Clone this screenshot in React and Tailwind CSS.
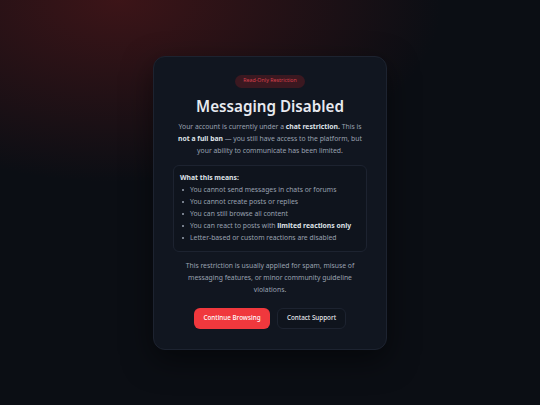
export default function App() {
  const items = [
    <>You cannot send messages in chats or forums</>,
    <>You cannot create posts or replies</>,
    <>You can still browse all content</>,
    <>
      You can react to posts with <strong className="font-bold text-[#dfe2e8]">limited reactions only</strong>
    </>,
    <>Letter-based or custom reactions are disabled</>,
  ];

  return (
    <div
      className="w-[540px] h-[405px] flex items-center justify-center bg-[#0b0e14] bg-[radial-gradient(ellipse_60%_45%_at_22%_0%,rgba(120,28,28,0.45),rgba(11,14,20,0)_100%)]"
      style={{ fontFamily: '"Noto Sans", "Open Sans", sans-serif' }}
    >
      <div className="w-[234px] rounded-xl border border-[#1d2330] bg-[#111620] px-5 pt-[18px] pb-5 flex flex-col items-center shadow-[0_10px_30px_rgba(0,0,0,0.5)]">
        <span className="rounded-full bg-[#3b1820] px-2 h-[13px] flex items-center text-[5.3px] text-[#d6414c]">
          Read-Only Restriction
        </span>
        <h1 className="mt-[7px] text-[15.2px] leading-[22px] font-semibold text-[#e8eaf0]">Messaging Disabled</h1>
        <p className="mt-[4px] text-center text-[6.8px] leading-[12px] text-[#9aa2b1]">
          Your account is currently under a <strong className="font-bold text-[#dfe2e8]">chat restriction.</strong> This is{" "}
          <strong className="font-bold text-[#dfe2e8]">not a full ban</strong> — you still have access to the platform, but
          your ability to communicate has been limited.
        </p>
        <div className="mt-[8px] w-[194px] rounded-md border border-[#1d2330] bg-[#0f141d] px-[6px] pt-[6px] pb-[7px]">
          <div className="text-[6.8px] leading-[12px] font-bold text-[#dfe2e8]">What this means:</div>
          <ul className="flex flex-col">
            {items.map((it, i) => (
              <li key={i} className="flex items-center text-[6.8px] leading-[12px] text-[#9aa2b1]">
                <span className="w-[2px] h-[2px] rounded-full bg-[#9aa2b1] ml-[2px] mr-[6px]" />
                <span>{it}</span>
              </li>
            ))}
          </ul>
        </div>
        <p className="mt-[8px] w-[180px] text-center text-[6.8px] leading-[12px] text-[#9aa2b1]">
          This restriction is usually applied for spam, misuse of messaging features, or minor community guideline
          violations.
        </p>
        <div className="mt-[12px] flex gap-[7px]">
          <button className="h-[21px] w-[76px] rounded-md bg-[#f0383d] text-[6.3px] font-medium text-white">
            Continue Browsing
          </button>
          <button className="h-[21px] w-[69px] rounded-md border border-[#1d2330] bg-[#0f141d] text-[6.3px] font-medium text-[#e5e7eb]">
            Contact Support
          </button>
        </div>
      </div>
    </div>
  );
}
